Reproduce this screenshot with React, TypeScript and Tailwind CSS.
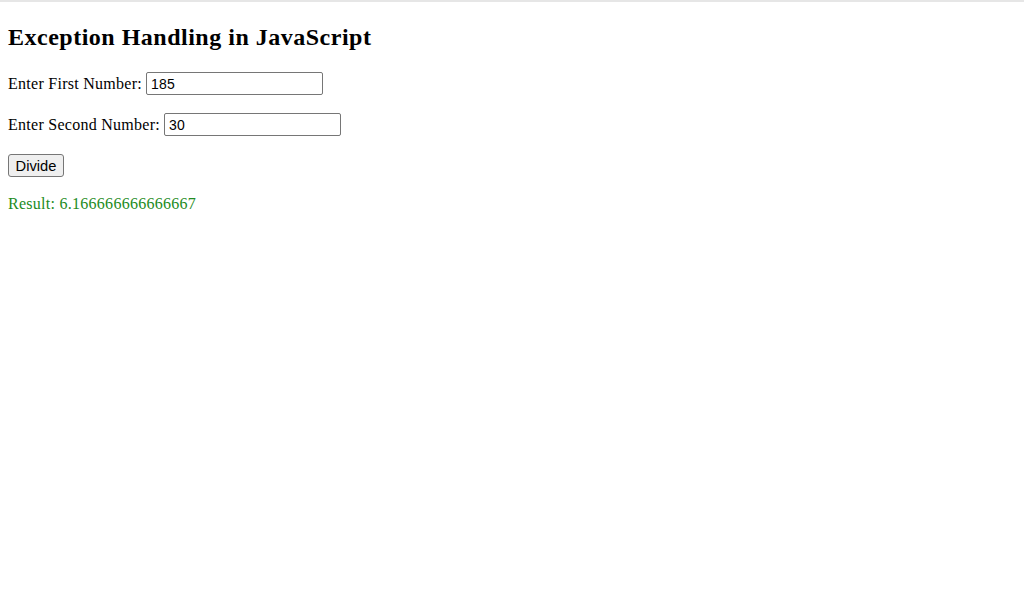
import { useState } from "react";

export default function App() {
  const [first, setFirst] = useState("185");
  const [second, setSecond] = useState("30");
  const [result, setResult] = useState("Result: 6.166666666666667");
  const [isError, setIsError] = useState(false);

  const handleDivide = () => {
    try {
      const a = Number(first);
      const b = Number(second);
      if (isNaN(a) || isNaN(b)) throw new Error("Please enter valid numbers");
      if (b === 0) throw new Error("Cannot divide by zero");
      setResult("Result: " + a / b);
      setIsError(false);
    } catch (err) {
      setResult("Error: " + (err as Error).message);
      setIsError(true);
    }
  };

  const inputCls =
    "w-[177px] h-[23px] border border-[#767676] rounded-[2px] px-[4px] text-[14px] font-['Liberation_Sans',Arial,sans-serif] text-black align-middle outline-none";

  return (
    <div className="min-h-[614px] bg-white border-t-2 border-[#e6e6e6] font-['Liberation_Serif','Times_New_Roman',serif] text-black">
      <div className="px-2 pt-[22px]">
        <h2 className="text-[24px] font-bold leading-[27px] tracking-[0.5px]">
          Exception Handling in JavaScript
        </h2>
        <div className="mt-[21px] flex flex-col gap-[18px] text-[16px] tracking-[0.27px]">
          <p className="h-[23px] flex items-center">
            <label htmlFor="first" className="mr-[4px]">
              Enter First Number:
            </label>
            <input
              id="first"
              type="text"
              value={first}
              onChange={(e) => setFirst(e.target.value)}
              className={inputCls}
            />
          </p>
          <p className="h-[23px] flex items-center">
            <label htmlFor="second" className="mr-[4px]">
              Enter Second Number:
            </label>
            <input
              id="second"
              type="text"
              value={second}
              onChange={(e) => setSecond(e.target.value)}
              className={inputCls}
            />
          </p>
          <p className="h-[23px] flex items-center">
            <button
              onClick={handleDivide}
              className="w-[56px] h-[23px] border border-[#767676] rounded-[3px] bg-[#efefef] text-[14.7px] tracking-normal font-['Liberation_Sans',Arial,sans-serif] text-black"
            >
              Divide
            </button>
          </p>
          <p
            className={
              isError
                ? "text-[16px] leading-[18px] text-red-600"
                : "text-[16px] leading-[18px] text-[#228b22]"
            }
          >
            {result}
          </p>
        </div>
      </div>
    </div>
  );
}
